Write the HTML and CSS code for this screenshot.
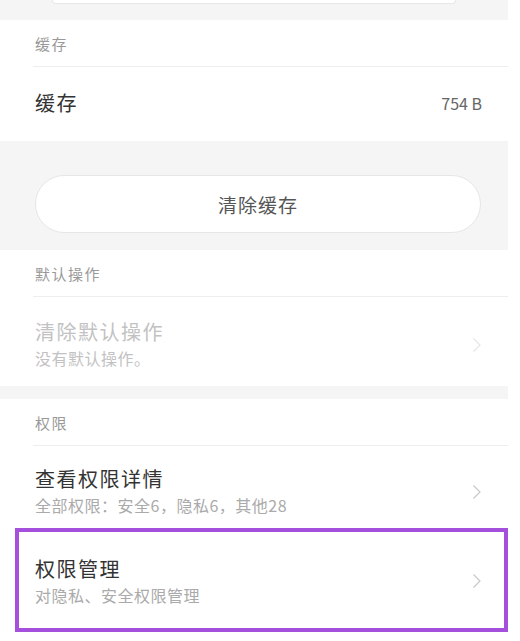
FILE: index.html
```html
<!DOCTYPE html>
<html lang="zh-CN">
<head>
<meta charset="utf-8">
<link rel="stylesheet" href="styles.css">
</head>
<body>
<div class="page">
  <div class="gap gap-top"><div class="prev-btn"></div></div>

  <section class="card">
    <div class="header">缓存</div>
    <div class="row row-single">
      <span class="title">缓存</span>
      <span class="value">754 B</span>
    </div>
  </section>

  <div class="gap gap-btn">
    <button class="pill">清除缓存</button>
  </div>

  <section class="card">
    <div class="header">默认操作</div>
    <div class="row row-double row-disabled">
      <div class="texts">
        <div class="title">清除默认操作</div>
        <div class="sub">没有默认操作。</div>
      </div>
      <svg class="chev" width="10" height="16" viewBox="0 0 10 16"><path d="M1.5 1.5 L8 8 L1.5 14.5" fill="none" stroke="currentColor" stroke-width="1.2"/></svg>
    </div>
  </section>

  <div class="gap gap-small"></div>

  <section class="card">
    <div class="header">权限</div>
    <div class="row row-double row-detail">
      <div class="texts">
        <div class="title">查看权限详情</div>
        <div class="sub">全部权限：安全6，隐私6，其他28</div>
      </div>
      <svg class="chev" width="10" height="16" viewBox="0 0 10 16"><path d="M1.5 1.5 L8 8 L1.5 14.5" fill="none" stroke="currentColor" stroke-width="1.2"/></svg>
    </div>
    <div class="row row-double row-highlight">
      <div class="texts">
        <div class="title">权限管理</div>
        <div class="sub">对隐私、安全权限管理</div>
      </div>
      <svg class="chev" width="10" height="16" viewBox="0 0 10 16"><path d="M1.5 1.5 L8 8 L1.5 14.5" fill="none" stroke="currentColor" stroke-width="1.2"/></svg>
    </div>
  </section>
</div>
</body>
</html>
```

FILE: styles.css
```css
* { box-sizing: border-box; }
html, body { margin: 0; padding: 0; background: #fff; }
body {
  font-family: "Noto Sans CJK SC", "Noto Sans", sans-serif;
  color: #333;
}
.page {
  width: 508px;
  display: flex;
  flex-direction: column;
}
.gap { background: #f5f5f5; }
.gap-top { height: 20px; padding: 0 52px; }
.prev-btn {
  height: 4px;
  background: #fff;
  border: 1px solid #e8e8e8;
  border-top: none;
  border-radius: 0 0 14px 14px;
}
.gap-btn {
  height: 109px;
  padding: 34px 27px 0 35px;
}
.pill {
  display: flex;
  align-items: center;
  justify-content: center;
  width: 100%;
  height: 58px;
  border-radius: 29px;
  background: #fff;
  border: 1px solid #e6e6e6;
  font-family: inherit;
  font-size: 19px;
  letter-spacing: 1px;
  color: #555;
  padding: 0;
  margin: 0;
}
.gap-small { height: 13px; }
.card { background: #fff; display: flex; flex-direction: column; }
.header {
  height: 47px;
  margin-left: 33px;
  padding-left: 2px;
  display: flex;
  align-items: center;
  font-size: 15px;
  letter-spacing: 1.5px;
  color: #999;
  border-bottom: 1px solid #eeeeee;
}
.row {
  display: flex;
  align-items: center;
  justify-content: space-between;
  padding: 0 26px 0 35px;
}
.row-single { height: 74px; padding-bottom: 2px; }
.title { font-size: 20px; line-height: 24px; letter-spacing: 1.5px; color: #333; }
.value { font-size: 16px; color: #666; }
.sub { font-size: 16px; line-height: 22px; letter-spacing: 0.5px; color: #aaa; margin-top: 3px; }
.row-double .texts { display: flex; flex-direction: column; }
.row-disabled { height: 89px; padding-top: 6px; }
.row-disabled .title, .row-disabled .sub { color: #c2c2c2; }
.row-disabled .chev { color: #e6e6e6; }
.row-detail { height: 82px; padding-top: 9px; }
.chev { color: #c8c8c8; flex: none; }
.row-highlight {
  height: 104px;
  margin-left: 15px;
  border: 4px solid #a550dc;
  padding: 2px 22px 0 16px;
}
```
